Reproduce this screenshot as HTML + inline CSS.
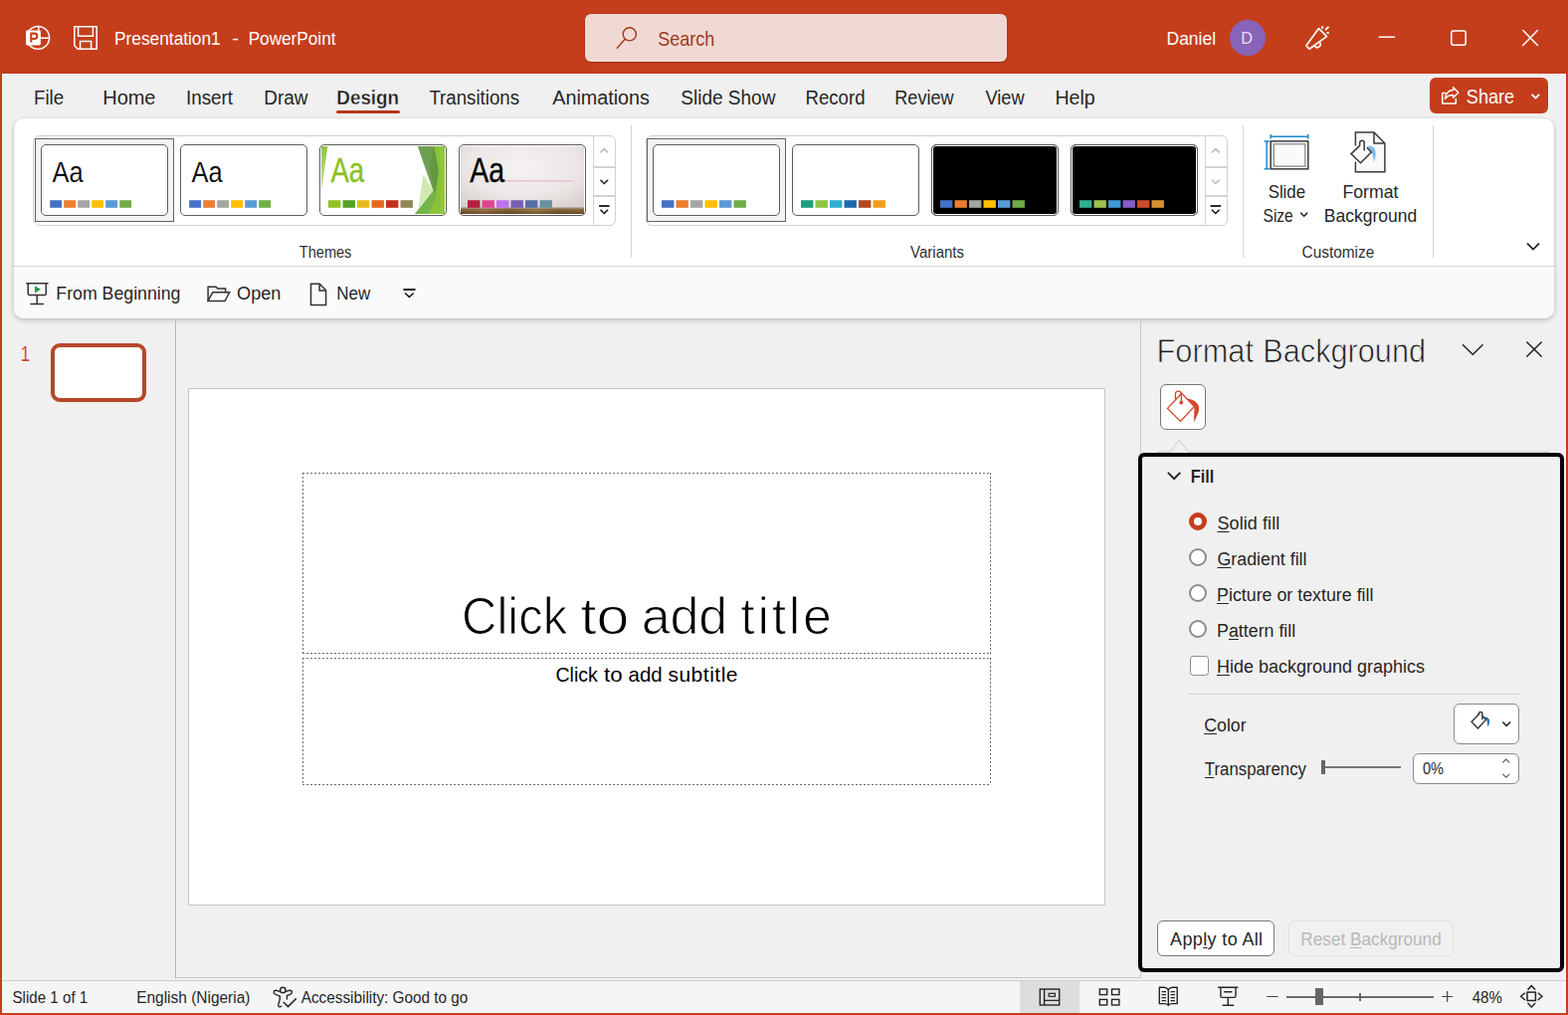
<!DOCTYPE html>
<html lang="en">
<head>
<meta charset="utf-8">
<title>Presentation1 - PowerPoint</title>
<style>
*{box-sizing:border-box;margin:0;padding:0}
html,body{width:1576px;height:1020px;overflow:hidden;background:#F0F0F0;font-family:"Liberation Sans",sans-serif}
#app{position:relative;width:1576px;height:1020px;overflow:hidden;background:#F0F0F0}
.a{position:absolute}
.t{position:absolute;white-space:pre;line-height:1;transform-origin:0 50%}
.t u{text-decoration:underline;text-decoration-thickness:1px;text-underline-offset:2px}
svg{position:absolute;overflow:visible}
#titlebar{left:0;top:0;width:1576px;height:74px;background:#C43E1C}
#search{left:588px;top:14px;width:424px;height:48px;border-radius:6px;background:#F0D9D3;box-shadow:0 1px 2px rgba(110,20,0,.45),0 0 1px rgba(110,20,0,.35)}
#avatar{left:1236px;top:20px;width:36px;height:36px;border-radius:50%;background:#8764B8}
#share{left:1437px;top:78px;width:119px;height:36px;border-radius:6px;background:#C43E1C}
#tabline{left:338px;top:111px;width:64px;height:3px;border-radius:2px;background:#B4381A}
#ribbon{left:14px;top:119px;width:1548px;height:201px;border-radius:10px;background:#fff;box-shadow:0 2px 5px rgba(0,0,0,.2),0 0 2px rgba(0,0,0,.1)}
#qat{left:0;top:148px;width:1548px;height:53px;background:#FAFAFA;border-top:1px solid #D4D4D4;border-radius:0 0 10px 10px}
.gal{border:1px solid #D2D2D2;border-radius:6px;background:#fff}
.sel{border:1px solid #616161;background:#F3F3F3}
.th{width:128px;height:72px;top:145px;border:1px solid #5E5E5E;border-radius:5px;background:#fff;overflow:hidden}
.sw{position:absolute;top:55px;height:8px;width:12.4px}
.vsep{width:1px;top:126px;height:133px;background:#D6D6D6}
.gdiv{height:1px;background:#D2D2D2}
#bl{left:0;top:74px;width:2px;height:946px;background:#C43E1C}
#br{left:1574px;top:74px;width:2px;height:946px;background:#C43E1C}
#bb{left:0;top:1018px;width:1576px;height:2px;background:#C43E1C}
#thumb{left:51px;top:345px;width:96px;height:59px;border:4px solid #B7472A;border-radius:9px;background:#fff}
#slide{left:189px;top:390px;width:922px;height:520px;background:#fff;border:1px solid #C6C6C6}
.ph{background:repeating-linear-gradient(90deg,#6E6E6E 0 2px,transparent 2px 4px) 0 0/100% 1px no-repeat,repeating-linear-gradient(90deg,#6E6E6E 0 2px,transparent 2px 4px) 0 100%/100% 1px no-repeat,repeating-linear-gradient(180deg,#6E6E6E 0 2px,transparent 2px 4px) 0 0/1px 100% no-repeat,repeating-linear-gradient(180deg,#6E6E6E 0 2px,transparent 2px 4px) 100% 0/1px 100% no-repeat}
#focus{left:1144px;top:455px;width:428px;height:522px;border:4px solid #000;border-radius:6px;background:#F0F0F0}
.radio{width:18px;height:18px;border-radius:50%;border:2px solid #8C8C8C;background:#fff}
.radio.on{border:5px solid #C43E1C}
.btn{border:1px solid #7A7A7A;border-radius:6px;background:#fff}
#status{left:2px;top:985px;width:1572px;height:33px;background:#F5F5F5;border-top:1px solid #CFCDCB}
</style>
</head>
<body>
<div id="app">
<div id="titlebar" class="a">
<div id="doc-title"><span class="t" id="t0" style="left:115px;top:30px;font-size:18.6px;color:#fff;transform:translateX(0.09px) scaleX(0.9291);">Presentation1</span>  <span class="t" id="t1" style="left:233px;top:30px;font-size:18.6px;color:#fff;transform:translateX(0.17px) scaleX(1.0846);">-</span>  <span class="t" id="t2" style="left:249px;top:30px;font-size:18.6px;color:#fff;transform:translateX(0.64px) scaleX(0.9239);">PowerPoint</span></div>
<div id="search" class="a"></div>
<span class="t" id="t3" style="left:661px;top:30px;font-size:19.8px;color:#A0391D;transform:translateX(0.31px) scaleX(0.9104);">Search</span>
<span class="t" id="t4" style="left:1172px;top:30px;font-size:18.6px;color:#fff;transform:translateX(0.53px) scaleX(0.9386);">Daniel</span>
<div id="avatar" class="a"></div>
<span class="t" id="t5" style="left:1247px;top:30px;font-size:17.2px;color:#E8DFF3;transform:translateX(0.29px) scaleX(0.9432);">D</span>
</div>
<div id="tabs">
<span class="t" id="t6" style="left:33px;top:88px;font-size:20px;color:#262626;transform:translateX(0.99px) scaleX(0.9373);">File</span>
<span class="t" id="t7" style="left:103.26px;top:88px;font-size:20px;color:#262626;letter-spacing:-0.047px;">Home</span>
<span class="t" id="t8" style="left:186px;top:88px;font-size:20px;color:#262626;transform:translateX(0.91px) scaleX(0.9438);">Insert</span>
<span class="t" id="t9" style="left:265px;top:88px;font-size:20px;color:#262626;transform:translateX(0.21px) scaleX(0.9473);">Draw</span>
<span class="t" id="t10" style="left:338px;top:88px;font-size:20px;color:#1A1A1A;font-weight:700;-webkit-text-stroke:0.35px #F0F0F0;transform:translateX(0.36px) scaleX(0.9407);">Design</span>
<span class="t" id="t11" style="left:431px;top:88px;font-size:20px;color:#262626;transform:translateX(0.39px) scaleX(0.9335);">Transitions</span>
<span class="t" id="t12" style="left:555px;top:88px;font-size:20px;color:#262626;transform:translateX(0.23px) scaleX(0.9876);">Animations</span>
<span class="t" id="t13" style="left:684px;top:88px;font-size:20px;color:#262626;transform:translateX(0.28px) scaleX(0.9505);">Slide Show</span>
<span class="t" id="t14" style="left:809px;top:88px;font-size:20px;color:#262626;transform:translateX(0.53px) scaleX(0.9299);">Record</span>
<span class="t" id="t15" style="left:899px;top:88px;font-size:20px;color:#262626;transform:translateX(0.31px) scaleX(0.9022);">Review</span>
<span class="t" id="t16" style="left:990px;top:88px;font-size:20px;color:#262626;transform:translateX(0.41px) scaleX(0.9114);">View</span>
<span class="t" id="t17" style="left:1060px;top:88px;font-size:20px;color:#262626;transform:translateX(0.38px) scaleX(0.9803);">Help</span>
<div id="tabline" class="a"></div>
<div id="share" class="a"></div>
<span class="t" id="t18" style="left:1473px;top:87px;font-size:20.4px;color:#fff;transform:translateX(0.87px) scaleX(0.8867);">Share</span>
</div>
<div id="ribbon" class="a"><div id="qat" class="a"></div></div>
<div class="a gal" style="left:33px;top:136px;width:586px;height:91px"></div>
<div class="a gal" style="left:649px;top:136px;width:585px;height:91px"></div>
<div class="a sel" style="left:35px;top:139px;width:140px;height:84px"></div>
<div class="a sel" style="left:650px;top:139px;width:140px;height:84px"></div>
<div class="a" style="left:596px;top:137px;width:1px;height:89px;background:#D2D2D2"></div>
<div class="a gdiv" style="left:597px;top:167px;width:22px;height:2px"></div>
<div class="a gdiv" style="left:597px;top:196px;width:22px;height:2px"></div>
<div class="a" style="left:1211px;top:137px;width:1px;height:89px;background:#D2D2D2"></div>
<div class="a gdiv" style="left:1212px;top:167px;width:22px;height:2px"></div>
<div class="a gdiv" style="left:1212px;top:196px;width:22px;height:2px"></div>
<div class="a th" style="left:41px"><svg class="sws" width="126" height="8" viewBox="0 0 126 8" style="left:0;top:55px" aria-hidden="true"><rect x="8.20" y="0.2" width="11.9" height="7.6" fill="#4472C4"/><rect x="22.20" y="0.2" width="11.9" height="7.6" fill="#ED7D31"/><rect x="36.20" y="0.2" width="11.9" height="7.6" fill="#A5A5A5"/><rect x="50.20" y="0.2" width="11.9" height="7.6" fill="#FFC000"/><rect x="64.20" y="0.2" width="11.9" height="7.6" fill="#5B9BD5"/><rect x="78.20" y="0.2" width="11.9" height="7.6" fill="#70AD47"/></svg></div>
<div class="a th" style="left:181px"><svg class="sws" width="126" height="8" viewBox="0 0 126 8" style="left:0;top:55px" aria-hidden="true"><rect x="8.20" y="0.2" width="11.9" height="7.6" fill="#4472C4"/><rect x="22.20" y="0.2" width="11.9" height="7.6" fill="#ED7D31"/><rect x="36.20" y="0.2" width="11.9" height="7.6" fill="#A5A5A5"/><rect x="50.20" y="0.2" width="11.9" height="7.6" fill="#FFC000"/><rect x="64.20" y="0.2" width="11.9" height="7.6" fill="#5B9BD5"/><rect x="78.20" y="0.2" width="11.9" height="7.6" fill="#70AD47"/></svg></div>
<div class="a th" id="facet" style="left:321px"><svg width="124" height="68" viewBox="0 0 124 68" style="left:1px;top:1px" aria-hidden="true"><defs><linearGradient id="fg1" x1="0" y1="0" x2="0" y2="1"><stop offset="0" stop-color="#8CC63F"/><stop offset="1" stop-color="#C9E39A"/></linearGradient></defs><path d="M0 0H6.3L0.6 42H0Z" fill="url(#fg1)"/><path d="M112.500 0H124V68H107.500L113.500 47Z" fill="#8BC235"/><path d="M118 0H124V68H119L121 30Z" fill="#93C83D"/><path d="M96.800 0H113L117.800 24L114.500 49L112.300 44.500Z" fill="#6E9E50"/><path d="M109 22L113 0L117.800 24L114.500 49Z" fill="#63983F"/><path d="M102.500 28L112.400 44.600L97.500 62Z" fill="#D3E8AE"/><path d="M93.800 68L112.400 44.600L115.200 50.500L108 68Z" fill="#73B44B"/></svg><svg class="sws" width="126" height="8" viewBox="0 0 126 8" style="left:0;top:55px" aria-hidden="true"><rect x="8.00" y="0.2" width="12.4" height="7.6" fill="#90C226"/><rect x="22.50" y="0.2" width="12.4" height="7.6" fill="#54A021"/><rect x="37.00" y="0.2" width="12.4" height="7.6" fill="#E6B91E"/><rect x="51.50" y="0.2" width="12.4" height="7.6" fill="#E76618"/><rect x="66.00" y="0.2" width="12.4" height="7.6" fill="#C42F1A"/><rect x="80.50" y="0.2" width="12.4" height="7.6" fill="#918655"/></svg></div>
<div class="a th" id="gallery" style="left:461px"><svg width="124" height="68" viewBox="0 0 124 68" style="left:1px;top:1px" aria-hidden="true"><defs><radialGradient id="gg1" cx="0.5" cy="0.3" r="0.8"><stop offset="0" stop-color="#F5F2F1"/><stop offset="0.55" stop-color="#ECE7E6"/><stop offset="1" stop-color="#D3CAC9"/></radialGradient><linearGradient id="gg2" x1="0" y1="0" x2="1" y2="0"><stop offset="0" stop-color="#6F4F2B"/><stop offset="0.18" stop-color="#8A6538"/><stop offset="0.4" stop-color="#6E4F29"/><stop offset="0.62" stop-color="#8C693B"/><stop offset="0.8" stop-color="#70512B"/><stop offset="1" stop-color="#7C5A31"/></linearGradient><linearGradient id="gg3" x1="0" y1="0" x2="0" y2="1"><stop offset="0" stop-color="#E9DFD4" stop-opacity="0.6"/><stop offset="0.3" stop-color="#B89A74" stop-opacity="0.25"/><stop offset="1" stop-color="#3A240F" stop-opacity="0.3"/></linearGradient></defs><rect width="124" height="68" fill="url(#gg1)"/><rect x="23" y="34" width="91" height="1.6" fill="#EBC3CF"/><rect x="0" y="61.6" width="124" height="6.4" fill="url(#gg2)"/><rect x="0" y="61.6" width="124" height="6.4" fill="url(#gg3)"/></svg><svg class="sws" width="126" height="8" viewBox="0 0 126 8" style="left:0;top:55px" aria-hidden="true"><rect x="8.00" y="0.2" width="12.4" height="7.6" fill="#B71E42"/><rect x="22.50" y="0.2" width="12.4" height="7.6" fill="#DE478E"/><rect x="37.00" y="0.2" width="12.4" height="7.6" fill="#BC72F0"/><rect x="51.50" y="0.2" width="12.4" height="7.6" fill="#795FAF"/><rect x="66.00" y="0.2" width="12.4" height="7.6" fill="#586EA6"/><rect x="80.50" y="0.2" width="12.4" height="7.6" fill="#6892A0"/></svg></div>
<span class="t" id="t19" style="left:52px;top:158px;font-size:29.4px;color:#000;-webkit-text-stroke:0.15px #fff;transform:translateX(0.43px) scaleX(0.8666);">Aa</span>
<span class="t" id="t20" style="left:192px;top:158px;font-size:29.4px;color:#000;-webkit-text-stroke:0.15px #fff;transform:translateX(0.43px) scaleX(0.8666);">Aa</span>
<span class="t dil" id="t21" style="left:332px;top:153px;font-size:35px;color:#8CC21F;-webkit-text-stroke:0.35px #8CC21F;transform:translateX(0.40px) scaleX(0.7868);">Aa</span>
<span class="t dil" id="t22" style="left:472px;top:153px;font-size:35px;color:#000;-webkit-text-stroke:0.30px #000;transform:translateX(0.29px) scaleX(0.8118);">Aa</span>
<div class="a th" style="left:656px"><svg class="sws" width="126" height="8" viewBox="0 0 126 8" style="left:0;top:55px" aria-hidden="true"><rect x="8.00" y="0.2" width="12.4" height="7.6" fill="#4472C4"/><rect x="22.50" y="0.2" width="12.4" height="7.6" fill="#ED7D31"/><rect x="37.00" y="0.2" width="12.4" height="7.6" fill="#A5A5A5"/><rect x="51.50" y="0.2" width="12.4" height="7.6" fill="#FFC000"/><rect x="66.00" y="0.2" width="12.4" height="7.6" fill="#5B9BD5"/><rect x="80.50" y="0.2" width="12.4" height="7.6" fill="#70AD47"/></svg></div>
<div class="a th" style="left:796px"><svg class="sws" width="126" height="8" viewBox="0 0 126 8" style="left:0;top:55px" aria-hidden="true"><rect x="8.00" y="0.2" width="12.4" height="7.6" fill="#1E9E7E"/><rect x="22.50" y="0.2" width="12.4" height="7.6" fill="#8CC641"/><rect x="37.00" y="0.2" width="12.4" height="7.6" fill="#30AFCE"/><rect x="51.50" y="0.2" width="12.4" height="7.6" fill="#1D6AAB"/><rect x="66.00" y="0.2" width="12.4" height="7.6" fill="#B7471A"/><rect x="80.50" y="0.2" width="12.4" height="7.6" fill="#F09E1A"/></svg></div>
<div class="a th" style="left:936px;background:#000;box-shadow:inset 0 0 0 1px #fff"><svg class="sws" width="126" height="8" viewBox="0 0 126 8" style="left:0;top:55px" aria-hidden="true"><rect x="8.00" y="0.2" width="12.4" height="7.6" fill="#4472C4"/><rect x="22.50" y="0.2" width="12.4" height="7.6" fill="#ED7D31"/><rect x="37.00" y="0.2" width="12.4" height="7.6" fill="#A5A5A5"/><rect x="51.50" y="0.2" width="12.4" height="7.6" fill="#FFC000"/><rect x="66.00" y="0.2" width="12.4" height="7.6" fill="#5B9BD5"/><rect x="80.50" y="0.2" width="12.4" height="7.6" fill="#70AD47"/></svg></div>
<div class="a th" style="left:1076px;background:#000;box-shadow:inset 0 0 0 1px #fff"><svg class="sws" width="126" height="8" viewBox="0 0 126 8" style="left:0;top:55px" aria-hidden="true"><rect x="8.00" y="0.2" width="12.4" height="7.6" fill="#2EB08D"/><rect x="22.50" y="0.2" width="12.4" height="7.6" fill="#9DC24C"/><rect x="37.00" y="0.2" width="12.4" height="7.6" fill="#3C9AD5"/><rect x="51.50" y="0.2" width="12.4" height="7.6" fill="#8460C4"/><rect x="66.00" y="0.2" width="12.4" height="7.6" fill="#CF4B2E"/><rect x="80.50" y="0.2" width="12.4" height="7.6" fill="#D99233"/></svg></div>
<div class="a vsep" style="left:634px"></div>
<div class="a vsep" style="left:1249px"></div>
<div class="a vsep" style="left:1440px"></div>
<span class="t" id="t23" style="left:300px;top:246px;font-size:15.6px;color:#303030;transform:translateX(0.85px) scaleX(0.9324);">Themes</span>
<span class="t" id="t24" style="left:915px;top:246px;font-size:15.6px;color:#303030;transform:translateX(0.08px) scaleX(0.9626);">Variants</span>
<span class="t" id="t25" style="left:1308px;top:246px;font-size:15.6px;color:#303030;transform:translateX(0.52px) scaleX(0.9872);">Customize</span>
<span class="t" id="t26" style="left:1274px;top:185px;font-size:17.7px;color:#262626;transform:translateX(0.65px) scaleX(0.9518);">Slide</span>
<span class="t" id="t27" style="left:1269px;top:209px;font-size:17.7px;color:#262626;transform:translateX(0.49px) scaleX(0.8805);">Size</span>
<span class="t" id="t28" style="left:1349.44px;top:185px;font-size:17.7px;color:#262626;letter-spacing:0.002px;">Format</span>
<span class="t" id="t29" style="left:1330px;top:209px;font-size:17.7px;color:#262626;transform:translateX(0.75px) scaleX(0.9915);">Background</span>
<span class="t" id="t30" style="left:56px;top:286px;font-size:18.6px;color:#262626;transform:translateX(0.32px) scaleX(0.9535);">From Beginning</span>
<span class="t" id="t31" style="left:238px;top:286px;font-size:18.6px;color:#262626;transform:translateX(0.08px) scaleX(0.9742);">Open</span>
<span class="t" id="t32" style="left:338px;top:286px;font-size:18.6px;color:#262626;transform:translateX(0.31px) scaleX(0.9114);">New</span>
<div class="a" style="left:176px;top:322px;width:1px;height:661px;background:#B4B4B4"></div>
<div class="a" style="left:178px;top:982px;width:969px;height:1px;background:#C8C8C8"></div>
<div class="a" style="left:1146px;top:322px;width:1px;height:661px;background:#C8C8C8"></div>
<span class="t" id="t33" style="left:20px;top:345px;font-size:22px;color:#D04A26;transform:translateX(0.71px) scaleX(0.7607);">1</span>
<div id="thumb" class="a"></div>
<div id="slide" class="a"></div>
<div class="a ph" style="left:304px;top:475px;width:692px;height:182px"></div>
<div class="a ph" style="left:304px;top:661px;width:692px;height:128px"></div>
<div id="title-text"><span class="t" id="t34" style="left:464px;top:593px;font-size:52px;color:#000;-webkit-text-stroke:1.10px #fff;transform:translateX(0.11px) scaleX(0.9415);">Click</span> <span class="t" id="t35" style="left:583px;top:593px;font-size:52px;color:#000;-webkit-text-stroke:1.10px #fff;transform:translateX(0.13px) scaleX(1.1361);">to</span> <span class="t" id="t36" style="left:644.71px;top:593px;font-size:52px;color:#000;letter-spacing:-0.172px;-webkit-text-stroke:1.10px #fff;">add</span> <span class="t" id="t37" style="left:744.35px;top:593px;font-size:52px;color:#000;letter-spacing:2.673px;-webkit-text-stroke:1.10px #fff;">title</span> </div>
<div id="subtitle-text"><span class="t" id="t38" style="left:558px;top:667px;font-size:21px;color:#000;transform:translateX(0.40px) scaleX(0.9318);">Click</span> <span class="t" id="t39" style="left:607px;top:667px;font-size:21px;color:#000;transform:translateX(0.07px) scaleX(1.0623);">to</span> <span class="t" id="t40" style="left:631px;top:667px;font-size:21px;color:#000;transform:translateX(0.50px) scaleX(0.9762);">add</span> <span class="t" id="t41" style="left:671.38px;top:667px;font-size:21px;color:#000;letter-spacing:0.518px;">subtitle</span> </div>
<div id="pane-title"><span class="t" id="t42" style="left:1162px;top:337px;font-size:32.7px;color:#1A1A1A;-webkit-text-stroke:0.75px #F0F0F0;transform:translateX(0.58px) scaleX(0.9413);">Format</span> <span class="t" id="t43" style="left:1269px;top:337px;font-size:32.7px;color:#1A1A1A;-webkit-text-stroke:0.75px #F0F0F0;transform:translateX(0.24px) scaleX(0.9390);">Background</span></div>
<div class="a btn" style="left:1166px;top:386px;width:46px;height:46px;border-color:#767676"></div>
<div class="a" style="left:1163px;top:453px;width:394px;height:2px;background:#DADADA"></div>
<div id="focus" class="a"></div>
<span class="t" id="t44" style="left:1196px;top:470px;font-size:18.6px;color:#1A1A1A;font-weight:700;-webkit-text-stroke:0.12px #F0F0F0;transform:translateX(0.85px) scaleX(0.8744);">Fill</span>
<div class="a radio on" style="left:1195px;top:515.2px"></div>
<span class="t" id="t45" style="left:1223.47px;top:517px;font-size:18px;color:#262626;letter-spacing:0.079px;"><u>S</u>olid fill</span>
<div class="a radio" style="left:1195px;top:551.3px"></div>
<span class="t" id="t46" style="left:1223px;top:553px;font-size:18px;color:#262626;transform:translateX(0.50px) scaleX(0.9888);"><u>G</u>radient fill</span>
<div class="a radio" style="left:1195px;top:587.3px"></div>
<span class="t" id="t47" style="left:1223px;top:589px;font-size:18px;color:#262626;transform:translateX(0.04px) scaleX(0.9896);"><u>P</u>icture or texture fill</span>
<div class="a radio" style="left:1195px;top:623.3px"></div>
<span class="t" id="t48" style="left:1223px;top:625px;font-size:18px;color:#262626;transform:translateX(0.04px) scaleX(0.9894);">P<u>a</u>ttern fill</span>
<div class="a" style="left:1195.5px;top:659px;width:19.5px;height:19.5px;border:1.8px solid #8C8C8C;border-radius:3.5px;background:#fff"></div>
<span class="t" id="t49" style="left:1222.97px;top:661px;font-size:18px;color:#262626;letter-spacing:-0.000px;"><u>H</u>ide background graphics</span>
<div class="a" style="left:1195px;top:697px;width:332px;height:1px;background:#D0D0D0"></div>
<span class="t" id="t50" style="left:1210px;top:720px;font-size:18px;color:#262626;transform:translateX(0.16px) scaleX(0.9886);"><u>C</u>olor</span>
<div class="a btn" style="left:1461px;top:707px;width:66px;height:41px;border-color:#8A8A8A"></div>
<span class="t" id="t51" style="left:1210px;top:764px;font-size:18px;color:#262626;transform:translateX(0.80px) scaleX(0.9343);"><u>T</u>ransparency</span>
<div class="a" style="left:1328px;top:764px;width:4px;height:14px;background:#666"></div>
<div class="a" style="left:1332px;top:770px;width:76px;height:2px;background:#777"></div>
<div class="a btn" style="left:1420px;top:757px;width:107px;height:31px;border-color:#8A8A8A"></div>
<span class="t" id="t52" style="left:1429px;top:764px;font-size:16.4px;color:#262626;transform:translateX(0.97px) scaleX(0.8910);">0%</span>
<div class="a btn" style="left:1163px;top:925px;width:118px;height:36px"></div>
<span class="t" id="t53" style="left:1176.05px;top:935px;font-size:18px;color:#262626;letter-spacing:0.363px;">App<u>l</u>y to All</span>
<div class="a btn" style="left:1295px;top:925px;width:166px;height:36px;border-color:#E0E0E0;background:#F0F0F0"></div>
<span class="t" id="t54" style="left:1307px;top:935px;font-size:18px;color:#B8B8B8;transform:translateX(0.34px) scaleX(0.9547);">Reset <u>B</u>ackground</span>
<div id="status" class="a"><div class="a" style="left:1023px;top:0;width:60px;height:32px;background:#DDDDDD"></div></div>
<span class="t" id="t55" style="left:12px;top:995px;font-size:15.6px;color:#262626;transform:translateX(0.51px) scaleX(0.9706);">Slide 1 of 1</span>
<span class="t" id="t56" style="left:137px;top:995px;font-size:15.6px;color:#262626;transform:translateX(0.19px) scaleX(0.9910);">English (Nigeria)</span>
<span class="t" id="t57" style="left:302px;top:995px;font-size:15.6px;color:#262626;transform:translateX(0.73px) scaleX(0.9818);">Accessibility: Good to go</span>
<span class="t" id="t58" style="left:1479px;top:995px;font-size:15.6px;color:#262626;transform:translateX(0.71px) scaleX(0.9657);">48%</span>
<div class="a" style="left:1293px;top:1001px;width:148px;height:2px;background:#6A6A6A"></div>
<div class="a" style="left:1322px;top:993px;width:8px;height:17px;background:#666"></div>
<div class="a" style="left:1366px;top:998px;width:2px;height:8px;background:#6A6A6A"></div>
<div id="bl" class="a"></div><div id="br" class="a"></div><div id="bb" class="a"></div>
<svg id="icons" width="1576" height="1020" viewBox="0 0 1576 1020" style="left:0;top:0;pointer-events:none" aria-hidden="true">
<g class="ic-logo" fill="none" stroke="#fff" stroke-width="1.5" stroke-linecap="round" stroke-linejoin="round"><circle cx="38.2" cy="37.9" r="11.4"/><path d="M38.8 26.6V31M40.8 38.2H49.5"/><rect x="26" y="30.4" width="14.9" height="15" rx="1.3" fill="#fff" stroke="none"/><path d="M31.3 42.6V33.6h3.3a2.7 2.7 0 0 1 0 5.4h-3.3" stroke="#C43E1C" stroke-width="2.1" stroke-linecap="butt"/></g>
<g class="ic-save" fill="none" stroke="#fff" stroke-width="1.5" stroke-linejoin="miter"><path d="M74.8 26.8H97.2V49.2H78.2L74.8 45.8Z"/><path d="M78.6 26.8V36.2H93.4V26.8"/><path d="M80.6 49.2V41.6H91.6V49.2"/></g>
<g class="ic-search" fill="none" stroke="#A0391D" stroke-width="1.4" stroke-linecap="round"><circle cx="632.8" cy="34.3" r="6.6"/><path d="M628.3 39.3L620.3 48.3"/></g>
<g class="ic-mega" fill="none" stroke="#fff" stroke-width="1.7" stroke-linecap="round" stroke-linejoin="round"><path d="M1325.5 28.6L1333.5 36.6L1316 49.2L1312.8 46Z"/><path d="M1321.2 45.8a3 3 0 0 0 5.7-2.6"/><path d="M1329.1 26.3V28.8M1332.1 30.2L1335.5 26.8M1333.2 32.9H1336" stroke-width="1.9" stroke-linecap="butt"/></g>
<g class="ic-win" fill="none" stroke="#fff" stroke-width="1.5" stroke-linecap="round" stroke-linejoin="round"><path d="M1386.3 37.2H1401.6"/><rect x="1458.8" y="30.9" width="14.4" height="14.4" rx="2.4"/><path d="M1530.8 30.6L1545.4 45.6M1545.4 30.6L1530.8 45.6"/></g>
<g class="ic-share" fill="none" stroke="#fff" stroke-width="1.5" stroke-linecap="round" stroke-linejoin="round"><path d="M1452.6 93.5H1449.7V104.1H1463.3V99.4"/><path d="M1452.4 99.2c.5-5 3.500-8.200 8.200-8.600V87.800L1465.800 93L1460.600 98.200V95.500c-3.600 0-6.200 1.200-8.200 3.700Z"/><path d="M1539.600 94.800L1543.400 98.500L1547.200 94.800" stroke-width="1.800" stroke-linecap="butt"/></g>
<g class="ic-gal" fill="none" stroke-width="1.5" stroke-linecap="butt"><path d="M603.5 153.4l3.8-3.8 3.8 3.8" stroke="#B9B9B9"/><path d="M603.5 180.7l3.8 3.8 3.8-3.8" stroke="#1F1F1F"/><path d="M602.1 207h10.4" stroke="#111" stroke-width="1.8"/><path d="M603.5 210.7l3.8 3.8 3.8-3.8" stroke="#111"/></g>
<g class="ic-gal" fill="none" stroke-width="1.5" stroke-linecap="butt"><path d="M1218.0 153.4l3.8-3.8 3.8 3.8" stroke="#B9B9B9"/><path d="M1218.0 180.7l3.8 3.8 3.8-3.8" stroke="#B9B9B9"/><path d="M1216.6 207h10.4" stroke="#111" stroke-width="1.8"/><path d="M1218.0 210.7l3.8 3.8 3.8-3.8" stroke="#111"/></g>
<g class="ic-ssize" ><path d="M1276.500 137.200H1315.500M1277.200 135V139.500M1314.800 135V139.500M1273.200 141.200V170.500M1270.600 141.900H1275.800M1270.600 169.800H1275.800" stroke="#1E8BCD" stroke-width="1.500" fill="none"/><rect x="1277.200" y="141.900" width="37.600" height="27.900" fill="#fff" stroke="#3A3A3A" stroke-width="1.500"/><rect x="1280.300" y="144.800" width="31.600" height="22.300" fill="#FAFAFA" stroke="#767676" stroke-width="1.100"/></g>
<g class="ic-fbg" ><path d="M1362.400 146.400V133H1381L1391.900 144V172.800H1362.400V162.600" fill="#FAFAFA" stroke="#3A3A3A" stroke-width="1.500"/><path d="M1381 133V144H1391.900" fill="none" stroke="#3A3A3A" stroke-width="1.500"/><path d="M1374.400 147.200c4.600-1.800 8.400 1.600 8.300 6.800c0 3.600-.7 6.600-2 9.200c.1-3.800-.6-7.400-2.400-10.200Z" fill="#7DBBEB"/><path d="M1366.700 146.400L1358 154.600L1367.500 163.700L1378.300 153L1373.800 148.300" fill="#FAFAFA" stroke="#3A3A3A" stroke-width="1.500" stroke-linejoin="miter"/><path d="M1366.700 146.600V143.400a2.250 2.250 0 0 1 4.500 0V151.400" fill="none" stroke="#3A3A3A" stroke-width="1.500"/></g>
<g class="ic-chev" fill="none" stroke="#1F1F1F" stroke-width="1.6" stroke-linecap="square" stroke-linejoin="miter"><path d="M1307.200 213.700l3.500 3.500 3.500-3.500" stroke-width="1.600" stroke-linecap="butt"/><path d="M1535.600 245.200l5.400 5.300 5.400-5.300" stroke-width="1.700"/></g>
<g class="ic-qfb" fill="none" stroke="#333" stroke-width="1.5" stroke-linecap="butt" stroke-linejoin="miter" stroke-linecap="round"><path d="M26.300 284.700H48.500M28.200 285V295a1.500 1.500 0 0 0 1.500 1.500H44.800a1.500 1.500 0 0 0 1.500-1.500V285M37.200 296.600V305.600M30.400 305.600H43.900"/><path d="M35 287.200V294.400L41 290.700Z" fill="#1E9D46" stroke="none"/></g>
<g class="ic-qopen" fill="none" stroke="#333" stroke-width="1.5" stroke-linecap="butt" stroke-linejoin="miter"><path d="M209.100 302.400V288.200H217.100L218.700 289.900H226.600V293.400"/><path d="M209.100 302.500H226L230.600 293.800H213.700Z"/></g>
<g class="ic-qnew" fill="none" stroke="#333" stroke-width="1.5" stroke-linecap="butt" stroke-linejoin="miter"><path d="M312.500 285.300H321.300L327.600 291.800V306.500H312.500Z"/><path d="M321.100 285.300V291.900H327.600"/></g>
<g class="ic-qdd" fill="none" stroke="#111" stroke-width="1.500" stroke-linecap="square"><path d="M406.400 291H416.600" stroke-width="1.900"/><path d="M407.700 295l3.700 3.500 3.700-3.500"/></g>
<g class="ic-pane" fill="none" stroke="#222" stroke-width="1.500" stroke-linecap="square"><path d="M1470.600 346.700L1480.300 356.300L1490 346.700"/><path d="M1534.900 344L1549.100 358M1549.100 344L1534.900 358"/></g>
<g class="ic-bucket" fill="none" stroke="#D24726" stroke-width="1.300" stroke-linejoin="miter"><path d="M1187.700 395.300L1173.500 410.400L1186.500 423.400L1200.400 408.500Z" fill="#fff"/><path d="M1181.400 401.600V396.100a2.950 2.950 0 0 1 5.900 0V403.500"/><circle cx="1187.300" cy="404.600" r="1.900" fill="#D24726" stroke="none"/><path d="M1193.200 400.400c7.400 1.200 12 4.600 11.900 10.400c-.1 4.800-3.200 8.600-4.600 13.600c-1-5.600.2-10.600-.1-15.900Z" fill="#D24726" stroke="none"/></g>
<g class="ic-ptr" ><path d="M1175.600 455L1185.300 441.800L1195 455" fill="#F0F0F0" stroke="#CDCDCD" stroke-width="1"/></g>
<g class="ic-fchev" fill="none" stroke="#222" stroke-width="1.900" stroke-linecap="butt"><path d="M1173.900 474.900l6.200 6.200 6.200-6.200"/></g>
<g class="ic-cbucket" ><path d="M1495.500 730.400c1.300-2.200 1.900-4.300 1.600-6.300c-.4-2.600-2.600-3.900-5.300-3.600l2.600 3Z" fill="#1E6FBF"/><path d="M1486.400 717.700L1479.100 725.300L1485.400 731.900L1493.600 723.300L1490 719.600" fill="#fff" stroke="#333" stroke-width="1.400"/><path d="M1486.400 718.400V717.200a1.750 1.750 0 0 1 3.500 0V723.300" fill="none" stroke="#333" stroke-width="1.400"/><path d="M1510.300 725.500l3.900 3.900 3.900-3.900" fill="none" stroke="#222" stroke-width="1.500" stroke-linecap="butt"/></g>
<g class="ic-spin" fill="none" stroke="#5A5A5A" stroke-width="1.150" stroke-linecap="butt"><path d="M1510.300 766.400l3.500-3.400 3.500 3.400M1510.300 777.800l3.500 3.400 3.500-3.400"/></g>
<g class="ic-acc" fill="none" stroke="#262626" stroke-width="1.400" stroke-linejoin="miter" stroke-linecap="round"><circle cx="284.300" cy="995" r="2.700"/><path d="M281.600 996.600c-1.800-.6-3-1.400-4.200-1.400c-1.400 0-2.200.900-2.200 2c0 1.200.900 1.900 2.400 2.400l3.700 1.300c.3 2.400-.1 4.400-.9 6.600c-.5 1.400-1 2.400-.6 3.400c.5 1.200 2 1.200 3 .4M287 996.600c1.800-.6 3-1.400 4.200-1.400c1.400 0 2.200.900 2.200 2c0 1.200-.9 1.900-2.400 2.400l-2.600.9v3.600"/><path d="M285.200 1007.200l4.300 4.400 7.800-7.700" stroke-width="1.500"/></g>
<g class="ic-vnorm" fill="none" stroke="#262626" stroke-width="1.400" stroke-linejoin="miter"><rect x="1045.300" y="994" width="19.400" height="16"/><path d="M1049.600 994V1010M1049.600 1005.400H1064.700"/><rect x="1054.200" y="998.300" width="6.200" height="3" stroke-width="1.200"/></g>
<g class="ic-vsort" fill="none" stroke="#262626" stroke-width="1.400" stroke-linejoin="miter"><rect x="1105.300" y="994" width="7.400" height="5.600"/><rect x="1117.500" y="994" width="7.400" height="5.600"/><rect x="1105.300" y="1004.400" width="7.400" height="5.600"/><rect x="1117.500" y="1004.400" width="7.400" height="5.600"/></g>
<g class="ic-vread" fill="none" stroke="#262626" stroke-width="1.400" stroke-linejoin="miter"><path d="M1174.300 994.600c-1-1.600-2.400-2.300-4.200-2.300H1165.300V1008.600H1170.600c1.600 0 2.800.6 3.700 1.700c.9-1.100 2.100-1.700 3.700-1.700H1183.200V992.300H1178.500c-1.800 0-3.200.7-4.200 2.300ZM1174.300 994.600V1010"/><path d="M1167.500 996.700H1172M1167.500 999.700H1172M1167.500 1002.700H1172M1167.500 1005.700H1172M1176.500 996.700H1181M1176.500 999.700H1181M1176.500 1002.700H1181M1176.500 1005.700H1181" stroke-width="1.200"/></g>
<g class="ic-vshow" fill="none" stroke="#262626" stroke-width="1.400" stroke-linejoin="miter" stroke-linecap="round"><path d="M1224.600 992.300H1243.900M1226.900 992.500V1001a1.400 1.400 0 0 0 1.400 1.400H1240.600a1.400 1.400 0 0 0 1.400-1.400V992.500M1234.300 1002.500V1010.300M1229.200 1010.300H1239.700M1230.700 996.700H1237.900"/></g>
<g class="ic-zoom" fill="none" stroke="#444"><path d="M1273.300 1001.500H1284.500M1449.200 1001.500H1460.200M1454.700 996V1007" stroke-width="1.200"/></g>
<g class="ic-fit" fill="none" stroke="#262626" stroke-width="1.500" stroke-linejoin="miter" stroke-linecap="square"><rect x="1535" y="997.100" width="8.400" height="8.400"/><path d="M1536 994.100l3.300-3.400 3.300 3.400M1536 1008.600l3.300 3.400 3.300-3.400M1532.300 998.200l-3.600 3.100 3.600 3.200M1546.300 998.200l3.600 3.100-3.600 3.200"/></g>
</svg>
</div>
</body>
</html>
